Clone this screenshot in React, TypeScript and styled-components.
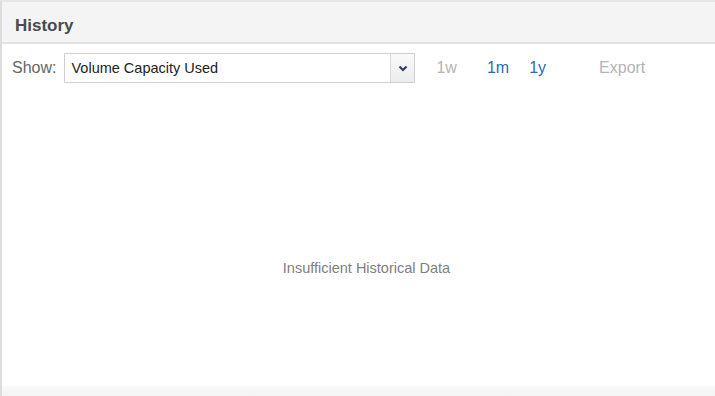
import styled, { createGlobalStyle } from "styled-components";

const Global = createGlobalStyle`
  html, body { margin: 0; padding: 0; background: #fff; }
  body { font-family: "Liberation Sans", Arial, sans-serif; }
`

const Panel = styled.div`
  width: 715px;
  height: 396px;
  box-sizing: border-box;
  border-top: 2px solid #e6e6e6;
  border-left: 2px solid #dcdcdc;
  display: flex;
  flex-direction: column;
  background: #fff;
`

const Header = styled.div`
  height: 42px;
  box-sizing: border-box;
  background: #f4f4f4;
  border-bottom: 2px solid #e2e2e2;
  display: flex;
  align-items: center;
  padding: 7px 0 0 13px;
  font-size: 17px;
  font-weight: bold;
  color: #4a4a4a;
`

const Toolbar = styled.div`
  display: flex;
  align-items: center;
  padding: 9px 0 0 10px;
  height: 30px;
`

const Label = styled.span`
  font-size: 16px;
  color: #666;
  margin-right: 8px;
`

const Select = styled.div`
  width: 351px;
  height: 30px;
  box-sizing: border-box;
  border: 1px solid #cfcfcf;
  display: flex;
  align-items: center;
  background: #fff;
`

const SelectText = styled.span`
  flex: 1;
  font-size: 14.5px;
  color: #222;
  padding-left: 6px;
`

const Arrow = styled.div`
  width: 23px;
  height: 100%;
  border-left: 1px solid #dadada;
  background: linear-gradient(#fafafa, #ececec);
  display: flex;
  align-items: center;
  justify-content: center;
`

const Range = styled.span<{ active?: boolean; m: number }>`
  font-size: 16px;
  color: ${p => (p.active ? "#2d6bb5" : "#b4b4b4")};
  margin-left: ${p => p.m}px;
`

const Body = styled.div`
  flex: 1;
  display: flex;
  align-items: center;
  justify-content: center;
  padding-left: 16px;
  padding-top: 66px;
  font-size: 14.5px;
  color: #808080;
`

const Footer = styled.div`
  height: 10px;
  background: linear-gradient(#fafafa, #f3f3f3);
`

export default function App() {
  return (
    <>
      <Global />
      <Panel>
        <Header>History</Header>
        <Toolbar>
          <Label>Show:</Label>
          <Select>
            <SelectText>Volume Capacity Used</SelectText>
            <Arrow>
              <svg width="10" height="7" viewBox="0 0 10 7">
                <path d="M1.5 1.5 L5 5 L8.5 1.5" stroke="#2f3f5f" strokeWidth="2.2" fill="none" />
              </svg>
            </Arrow>
          </Select>
          <Range m={21}>1w</Range>
          <Range active m={30}>1m</Range>
          <Range active m={20}>1y</Range>
          <Range m={53}>Export</Range>
        </Toolbar>
        <Body>Insufficient Historical Data</Body>
        <Footer />
      </Panel>
    </>
  )
}
